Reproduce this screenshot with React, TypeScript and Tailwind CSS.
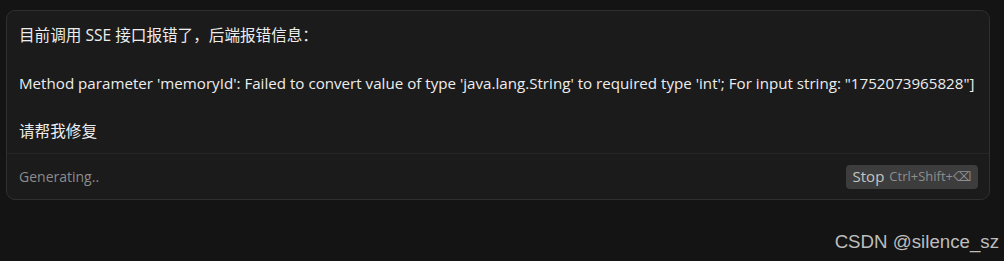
export default function App() {
  return (
    <div className="w-[1004px] h-[261px] bg-[#141414] flex flex-col pt-[10px] pl-[6px] font-['Segoe_UI','Open_Sans','Noto_Sans_CJK_SC',sans-serif]">
      <div className="w-[984px] rounded-[9px] border border-[#2f2f2f] bg-[#1b1b1b]">
        <div className="px-3 pt-3 pb-[10px] flex flex-col gap-[24px] leading-[24px] text-[#ededed]">
          <p className="text-[15.6px]">目前调用 SSE 接口报错了，后端报错信息：</p>
          <p className="text-[15.15px] whitespace-nowrap">
            Method parameter 'memoryId': Failed to convert value of type 'java.lang.String' to required type 'int'; For input string: "1752073965828"]
          </p>
          <p className="text-[15.6px]">请帮我修复</p>
        </div>
        <div className="border-t border-[#262626] flex items-center justify-between pl-3 pr-[11px] h-[46px]">
          <span className="text-[14px] text-[#8c8c8c]">Generating..</span>
          <button className="flex items-center gap-[5px] h-[24px] px-[7px] rounded-[4px] bg-[#3d3d3d]">
            <span className="text-[15px] text-[#c4c4c4]">Stop</span>
            <span className="text-[13px] text-[#8e8e8e]">Ctrl+Shift+⌫</span>
          </button>
        </div>
      </div>
      <div className="flex justify-end pr-[5px] mt-[31px]">
        <span className="font-['Liberation_Sans',Arial,sans-serif] text-[18.7px] leading-[22px] text-[#bdbdbd]">CSDN @silence_sz</span>
      </div>
    </div>
  );
}
